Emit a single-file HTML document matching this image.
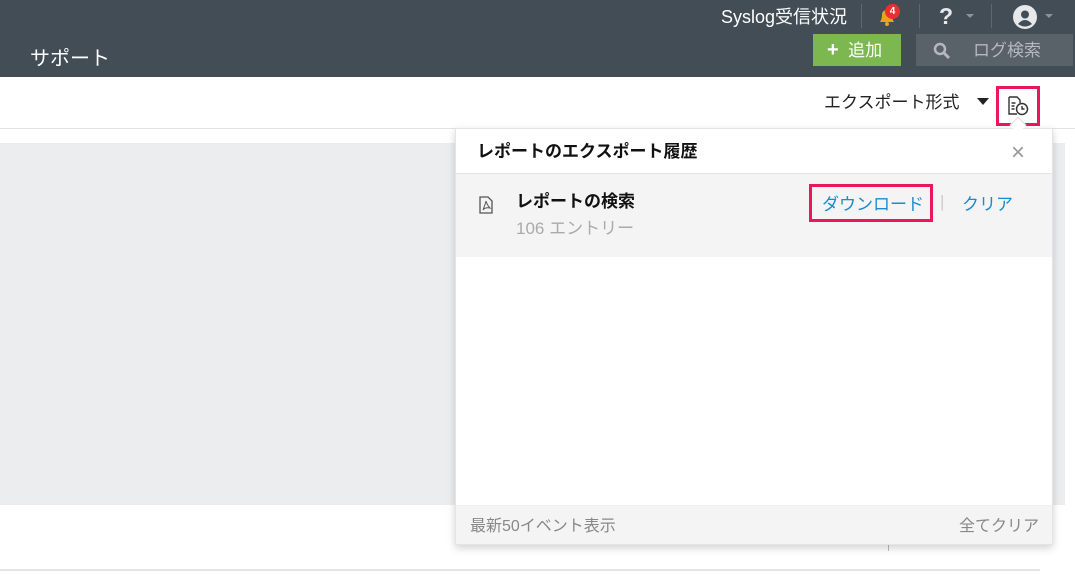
<!DOCTYPE html>
<html><head><meta charset="utf-8"><style>
*{margin:0;padding:0;box-sizing:border-box}
body{width:1075px;height:585px;position:relative;overflow:hidden;background:#fff;font-family:"Liberation Sans","Noto Sans CJK JP",sans-serif;}
.hdr{position:absolute;left:0;top:0;width:1075px;height:77px;background:#424d56;color:#fff}
.abs{position:absolute}
.sep{position:absolute;top:4px;width:1px;height:24px;background:#5d6870}
</style></head><body>
<div class="hdr">
  <div class="abs" style="left:721px;top:3px;font-size:18px;">Syslog受信状況</div>
  <div class="sep" style="left:861px"></div>
  <svg class="abs" style="left:876px;top:5px" width="22" height="22" viewBox="0 0 22 22"><path d="M4 17 Q6 14 6 10 Q6 5 11 5 Q16 5 16 10 Q16 14 18 17 Z" fill="#e8a519"/><circle cx="11" cy="19" r="2" fill="#e8a519"/></svg>
  <div class="abs" style="left:885px;top:4px;width:15px;height:15px;border-radius:50%;background:#e8312f;font-size:10px;font-weight:bold;text-align:center;line-height:15px">4</div>
  <div class="sep" style="left:919px"></div>
  <div class="abs" style="left:939px;top:3px;font-size:23px;font-weight:bold;color:#e6e8ea">?</div>
  <div class="abs" style="left:966px;top:14px;border:4px solid transparent;border-top:4px solid #8a949c"></div>
  <div class="sep" style="left:991px"></div>
  <svg class="abs" style="left:1013px;top:5px" width="24" height="24" viewBox="0 0 24 24"><circle cx="12" cy="12" r="12" fill="#e6e8ea"/><circle cx="12" cy="9.5" r="4" fill="#424d56"/><path d="M5 19 Q12 11 19 19 Q12 24 5 19Z" fill="#424d56"/></svg>
  <div class="abs" style="left:1045px;top:14px;border:4px solid transparent;border-top:4px solid #8a949c"></div>
  <div class="abs" style="left:30px;top:42px;font-size:20px;">サポート</div>
  <div class="abs" style="left:813px;top:34px;width:88px;height:32px;background:#7db750;font-size:17px;line-height:32px;padding-left:14px"><b style="font-size:20px">+</b>&nbsp; 追加</div>
  <div class="abs" style="left:916px;top:34px;width:157px;height:32px;background:#596269;font-size:17px;line-height:32px;color:#b3b9be">
    <svg class="abs" style="left:17px;top:8px" width="18" height="18" viewBox="0 0 18 18"><circle cx="7" cy="7" r="5" stroke="#b3b9be" stroke-width="2.5" fill="none"/><path d="M11 11 L16 16" stroke="#b3b9be" stroke-width="3"/></svg>
    <span class="abs" style="left:57px;top:1px">ログ検索</span></div>
</div>
<div class="abs" style="left:824px;top:88px;font-size:17px;color:#222">エクスポート形式</div>
<div class="abs" style="left:977px;top:98px;border:6px solid transparent;border-top:7px solid #222"></div>
<div class="abs" style="left:996px;top:86px;width:44px;height:40px;border:3px solid #e8185a"></div>
<svg class="abs" style="left:1007px;top:95px" width="24" height="22" viewBox="0 0 24 22"><path d="M2 2h8l3 3v3M2 2v17h8" stroke="#333" stroke-width="1.4" fill="none"/><path d="M4.5 8h4M4.5 11h3M4.5 14h3" stroke="#333" stroke-width="1.4"/><circle cx="15" cy="14" r="5.5" stroke="#333" stroke-width="1.5" fill="#fff"/><path d="M15 11v3h2.5" stroke="#333" stroke-width="1.4" fill="none"/></svg>
<div class="abs" style="left:0;top:128px;width:1075px;height:1px;background:#e2e2e2"></div>
<div class="abs" style="left:0;top:143px;width:1065px;height:362px;background:#ecedef"></div>
<div class="abs" style="left:888px;top:545px;width:1px;height:6px;background:#bbb"></div>
<div class="abs" style="left:0;top:569px;width:1040px;height:2px;background:#e4e4e4"></div>
<!-- popup -->
<div class="abs" style="left:455px;top:128px;width:598px;height:417px;background:#fff;box-shadow:0 3px 8px rgba(0,0,0,.18);border:1px solid #e4e4e4">
  <div class="abs" style="left:21px;top:8px;font-size:17px;font-weight:bold;color:#111">レポートのエクスポート履歴</div>
  <div class="abs" style="left:555px;top:10px;font-size:24px;color:#999">×</div>
  <div class="abs" style="left:0;top:44px;width:596px;height:84px;background:#f4f4f4;border-top:1px solid #e4e4e4">
    <svg class="abs" style="left:23px;top:22px" width="14" height="18" viewBox="0 0 14 18"><path d="M1 1h8l4 4v12H1Z" stroke="#555" stroke-width="1.3" fill="none"/><path d="M4 14 Q7 6 7 5 Q8 9 11 12 Q6 11 4 14" stroke="#555" stroke-width="1" fill="none"/></svg>
    <div class="abs" style="left:60px;top:13px;font-size:17px;font-weight:bold;color:#111">レポートの検索</div>
    <div class="abs" style="left:60px;top:40px;font-size:17px;color:#aaa">106 エントリー</div>
    <div class="abs" style="left:353px;top:10px;width:124px;height:38px;border:3px solid #e8185a"></div>
    <div class="abs" style="left:366px;top:16px;font-size:17px;color:#1a8bd0">ダウンロード</div>
    <div class="abs" style="left:484px;top:18px;font-size:17px;color:#ccc">|</div>
    <div class="abs" style="left:506px;top:16px;font-size:17px;color:#1a8bd0">クリア</div>
  </div>
  <div class="abs" style="left:0;top:376px;width:596px;height:39px;background:#f4f4f4;border-top:1px solid #eee">
    <div class="abs" style="left:14px;top:6px;font-size:16px;color:#888">最新50イベント表示</div>
    <div class="abs" style="right:13px;top:6px;font-size:16px;color:#888">全てクリア</div>
  </div>
</div>
<div class="abs" style="left:1012px;top:119px;width:12px;height:12px;background:#fff;transform:rotate(45deg);border-left:1px solid #ddd;border-top:1px solid #ddd"></div>
</body></html>
